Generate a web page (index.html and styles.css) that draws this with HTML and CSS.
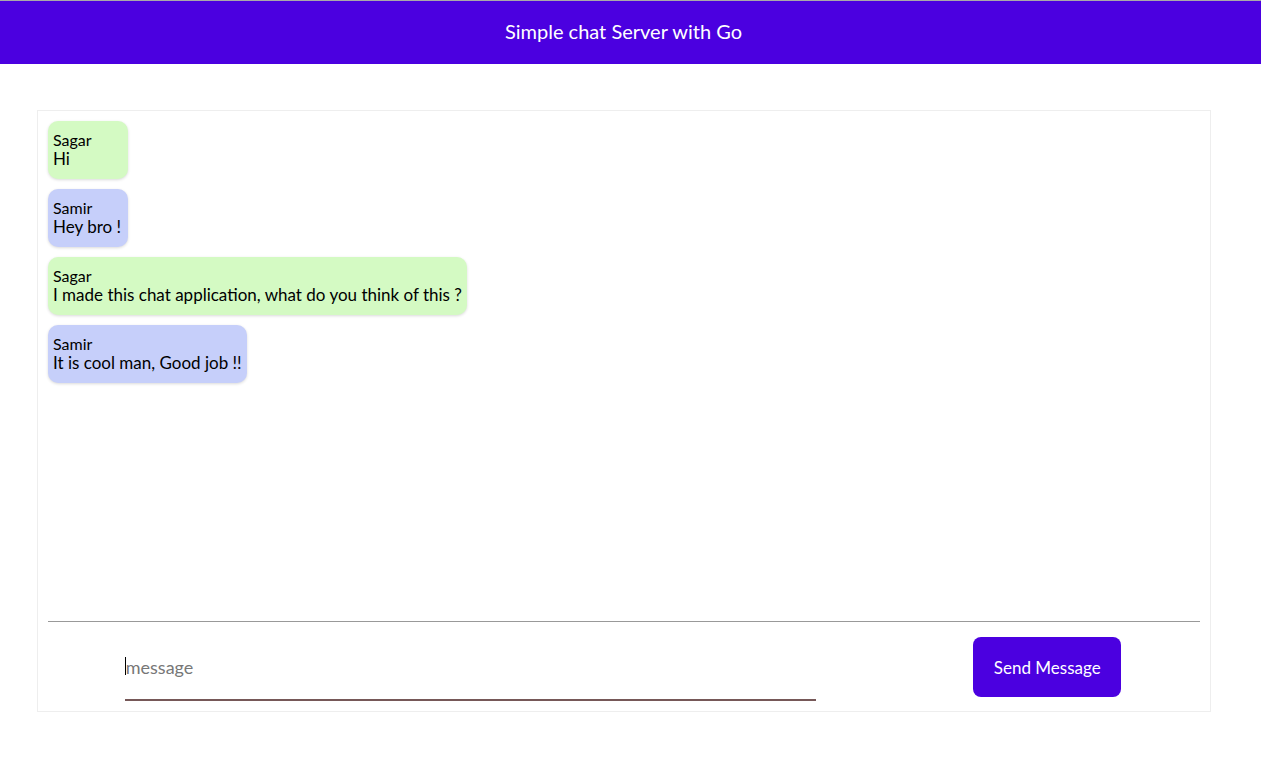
FILE: index.html
```html
<!DOCTYPE html>
<html lang="en">
<head>
<meta charset="utf-8">
<title>Simple chat Server with Go</title>
<link rel="stylesheet" href="styles.css">
</head>
<body>
<header class="topbar">Simple chat Server with Go</header>
<main class="chat">
  <div class="messages">
    <div class="bubble green"><div class="name">Sagar</div><div class="text">Hi</div></div>
    <div class="bubble blue"><div class="name">Samir</div><div class="text">Hey bro !</div></div>
    <div class="bubble green"><div class="name">Sagar</div><div class="text">I made this chat application, what do you think of this ?</div></div>
    <div class="bubble blue"><div class="name">Samir</div><div class="text">It is cool man, Good job !!</div></div>
  </div>
  <form class="composer">
    <span class="field"><input class="input" type="text" placeholder="message"></span>
    <button class="send" type="button">Send Message</button>
  </form>
</main>
</body>
</html>
```
FILE: styles.css
```css
* { box-sizing: border-box; }
html, body { margin: 0; padding: 0; background: #fff; }
body {
  font-family: "Lato", "Noto Sans", sans-serif;
  color: #000;
  border-top: 1px solid #a9a9a9;
}
.topbar {
  height: 63px;
  padding: 0 14px 3px 0;
  background: #4b00e0;
  color: #fff;
  font-size: 20px;
  display: flex;
  align-items: center;
  justify-content: center;
}
.chat {
  margin: 46px 0 0 37px;
  width: 1174px;
  border: 1px solid #eeeeee;
  padding: 10px 10px 10px 10px;
}
.messages {
  height: 500px;
  display: flex;
  flex-direction: column;
  align-items: flex-start;
  gap: 10px;
}
.bubble {
  min-width: 80px;
  padding: 10px 5px 10px 5px;
  border-radius: 10px;
  box-shadow: 0 1px 3px rgba(0, 0, 0, 0.15);
}
.green { background: #d4fac3; }
.blue { background: #c6cffa; }
.name { font-size: 16px; line-height: 17px; }
.text { font-size: 17px; line-height: 21px; }
.composer {
  border-top: 1px solid #999;
  padding-top: 15px;
  display: flex;
  justify-content: space-around;
  align-items: flex-start;
  margin: 0;
}
.field {
  position: relative;
  display: block;
  width: 691px;
  margin-left: -2px;
}
.field::before {
  content: "";
  position: absolute;
  left: 0;
  top: 20px;
  width: 1px;
  height: 18px;
  background: #000;
}
.input {
  display: block;
  width: 100%;
  height: 64px;
  border: none;
  border-bottom: 2px solid #765858;
  padding: 0 0 3px 1px;
  font-family: inherit;
  font-size: 18px;
  outline: none;
  background: transparent;
}
.input::placeholder { color: #777; }
.send {
  width: 148px;
  height: 60px;
  border: none;
  border-radius: 8px;
  background: #4b00e0;
  color: #fff;
  font-family: inherit;
  font-size: 17px;
}
```
